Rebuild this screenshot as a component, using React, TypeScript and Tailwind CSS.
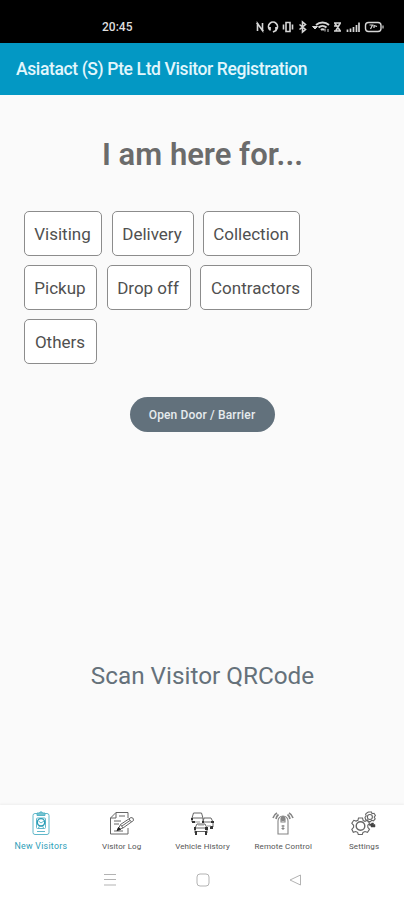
import React from "react";

const chipRows = [
  [
    { label: "Visiting", width: "w-[78px]" },
    { label: "Delivery", width: "w-[82px]" },
    { label: "Collection", width: "w-[97px]" },
  ],
  [
    { label: "Pickup", width: "w-[73px]" },
    { label: "Drop off", width: "w-[84px]" },
    { label: "Contractors", width: "w-[112px]" },
  ],
  [{ label: "Others", width: "w-[73px]" }],
];

function StatusIcons() {
  return (
    <svg width="130" height="14" viewBox="0 0 130 14" fill="none" stroke="#d6d6d6" strokeWidth="1.4">
      {/* NFC */}
      <path d="M2.5 11V3.5L7.5 10.5V3M1.5 3l2 1.5M8.5 11l-2-1.5" strokeWidth="1.6" />
      {/* headset */}
      <path d="M14.5 9.5A4.5 4.5 0 1 1 21.5 9.5M15 7v3.5M21 7v3.5L18 12" strokeWidth="1.7" />
      {/* vibrate */}
      <path d="M31 2.5h4v9h-4zM28.5 4.5v5M37.5 4.5v5" strokeWidth="1.6" />
      {/* bluetooth */}
      <path d="M44.5 4.5l6 5-3 2.5V2l3 2.5-6 5" strokeWidth="1.6" />
      {/* wifi */}
      <path d="M61 5a9.5 9.5 0 0 1 13 0M63.5 7.5a6 6 0 0 1 8 0M66 10a2 2 0 0 1 3 0" strokeWidth="1.9" />
      <path d="M57.5 6.5h5L60 9zM70 8.5v3M73 9v3" fill="#d6d6d6" strokeWidth="1" />
      {/* call over wifi */}
      <path d="M79 3h7M79 11h7M80 3.5l5 7M85 3.5l-4 7M79 6h4" strokeWidth="1.6" />
      {/* signal */}
      <path d="M92.5 9.5V12M95.5 8.5V12M98.5 7V12M101.5 5V12M104 2.5V12" strokeWidth="1.7" />
      {/* battery */}
      <rect x="110.5" y="2.5" width="15.5" height="9" rx="3" />
      <path d="M128 5.5v3M114.5 5h3l-2 4M119 8V5.5l3 1" strokeWidth="1.2" />
    </svg>
  );
}

function BadgeIcon() {
  return (
    <svg width="26" height="26" viewBox="0 0 26 26" fill="none" stroke="#4fb0c4" strokeWidth=".9">
      <rect x="5" y="3.5" width="16" height="21" rx="2" />
      <path d="M9 5.5V3h2.2a2 2 0 0 1 3.6 0H17v2.5z" fill="#73c3d0" />
      <rect x="8.5" y="8" width="9" height="10.5" rx="1" />
      <circle cx="13" cy="12.3" r="3.7" stroke="#2b9db7" strokeWidth="1.4" />
      <path d="M10.5 11l2.5 2 3-2M10 17.5q3-3 6 0M9 21.5h8" />
    </svg>
  );
}

function LogIcon() {
  return (
    <svg width="26" height="26" viewBox="0 0 26 26" fill="none" stroke="#666" strokeWidth="1">
      <path d="M19 8V2.5H7L1.5 8v16H19v-6M7 2.5V8H1.5M10 6h6M5 11h7M5 14h5M5 21h9" />
      <path d="M9 19.5l2.5-5L22 7.5q3 0 2.5 3L14 18z" fill="#fff" />
      <path d="M20 9l2.5 3M11.5 14.5L14 18M13 16l8-5.5" />
      <path d="M8 20.5l1.5-3 2 2z" fill="#222" stroke="#222" />
    </svg>
  );
}

function VehicleIcon() {
  return (
    <svg width="28" height="26" viewBox="0 0 28 26" fill="none" stroke="#666" strokeWidth="1">
      <path d="M4 8l1.5-5h8L15 8v3M4 8v4M4 8h11M15 12l1-4h7l2 4v5M15 12h10" />
      <path d="M7 18l2-4h8l2 4v5M7 18v5M7 18h12M9 21.5h8" />
      <path d="M3 8h2v2H3zM14 11h2v2h-2zM23 11h3v2h-3zM6 17h2v3H6zM17 17h3v3h-3zM7 21h2v4H7zM17 21h2v4h-2zM22 16h3v3h-3zM4 11h3v2H4z" fill="#343434" stroke="none" />
      <path d="M10 15h6M19 16h4M7 12h5" stroke="#999" />
    </svg>
  );
}

function RemoteIcon() {
  return (
    <svg width="26" height="26" viewBox="0 0 26 26" fill="none" stroke="#858585" strokeWidth="1.1">
      <path d="M8 24V11a5 5 0 0 1 10 0v13zM11 12V9a2 2 0 0 1 4 0v3z" />
      <circle cx="13" cy="9" r="1.7" fill="#888" />
      <path d="M11.5 16h3M11.5 18.5h3M13 15v5" />
      <path d="M3 8q1-3.5 4-5M6 9q.5-3 2.5-4.5M23 8q-1-3.5-4-5M20 9q-.5-3-2.5-4.5" strokeWidth="1.6" />
    </svg>
  );
}

function GearsIcon() {
  return (
    <svg width="26" height="26" viewBox="0 0 26 26" fill="none" stroke="#666" strokeWidth="1.1">
      <path d="M7.5 8h4l.7 2.5 1.8.8 2.5-1 2 3-1.7 2v2l1.7 2-2 3-2.5-.8-2 .9-.7 2.1h-4l-.7-2.2-1.9-.8-2.4.8-1.5-3 1.8-2v-2l-1.8-2 2-3 2.3.8 1.8-.8z" />
      <circle cx="9.5" cy="16" r="4.3" strokeWidth="1.4" />
      <path d="M17.5 2h3l.5 1.7 2-.4 1.4 2.2-1.2 1.6 1 1.8-1.7 2-2-.6-1 1.3h-2.4l-.7-1.7-1.7-.2-.7-2.4 1.2-1.4-.6-1.8 1.6-1.4z" />
      <circle cx="18.9" cy="7" r="2.5" />
      <path d="M20.5 13h2v1.5h1.5V17h-4v-1.5h-1.5V14h2z" fill="#444" stroke="#444" strokeWidth=".5" />
    </svg>
  );
}

const tabs = [
  { label: "New Visitors", icon: <BadgeIcon />, style: "mt-[5px] text-[#2b9db7] text-[8.8px] tracking-[0.28px]" },
  { label: "Visitor Log", icon: <LogIcon />, style: "mt-[6px] text-[#555] text-[8px] tracking-[0.08px]" },
  { label: "Vehicle History", icon: <VehicleIcon />, style: "mt-[6px] text-[#555] text-[8px] tracking-[0.08px]" },
  { label: "Remote Control", icon: <RemoteIcon />, style: "mt-[6px] text-[#555] text-[8px] tracking-[0.16px]" },
  { label: "Settings", icon: <GearsIcon />, style: "mt-[6px] text-[#555] text-[8px] tracking-[0.15px]" },
];

export default function App() {
  return (
    <div className="flex h-[900px] w-[404px] flex-col overflow-hidden bg-[#fafafa] font-[Roboto,sans-serif]">
      <div className="flex h-[43px] shrink-0 items-center justify-between bg-black pt-[11px] pr-[19px] pl-[102px]">
        <span className="text-[12px] leading-none font-medium text-[#dedede]">20:45</span>
        <StatusIcons />
      </div>

      <header className="flex h-[52px] shrink-0 items-center bg-[#0398c4] pb-px pl-4">
        <h1 className="mt-[2px] text-[17.5px] leading-none font-medium tracking-[-0.38px] whitespace-nowrap text-[#e2f6fc]">Asiatact (S) Pte Ltd Visitor Registration</h1>
      </header>

      <main className="flex flex-1 flex-col items-center">
        <h2 className="mt-[42px] ml-px text-[31px] leading-9 font-semibold whitespace-nowrap text-[#6b6b6b]">I am here for...</h2>
        <div className="mt-[38px] flex w-full flex-col gap-[9px] pl-6">
          {chipRows.map((row, i) => (
            <div key={i} className="flex gap-[9.5px]">
              {row.map((chip) => (
                <button key={chip.label} className={`flex h-[45px] items-center justify-center rounded-[5px] border border-[#8c8c8c] bg-white pt-[2px] pr-px text-[17px] font-normal whitespace-nowrap text-[#505050] ${chip.width}`}>
                  {chip.label}
                </button>
              ))}
            </div>
          ))}
        </div>
        <button className="mt-[33px] h-[35px] w-[145px] rounded-full bg-[#62717c] text-[12px] font-medium tracking-[0.15px] whitespace-nowrap text-[#e6ebee]">Open Door / Barrier</button>
        <p className="mt-[228px] ml-px text-[24.3px] leading-8 font-normal whitespace-nowrap text-[#65717a]">Scan Visitor QRCode</p>
      </main>

      <nav className="grid h-[55px] shrink-0 grid-cols-5 bg-white shadow-[0_-1px_2px_#eeeeee]">
        {tabs.map((tab) => (
          <div key={tab.label} className="flex flex-col items-center pt-[5px] pl-px">
            {tab.icon}
            <span className={`leading-[10px] whitespace-nowrap ${tab.style}`}>{tab.label}</span>
          </div>
        ))}
      </nav>
      <div className="flex h-10 shrink-0 items-start bg-white pt-[13px]">
        <svg className="ml-[103px]" width="14" height="14" viewBox="0 0 14 14" stroke="#b3b3b3"><path d="M1 1.5h12M1 6.5h12M1 12h12" /></svg>
        <svg className="ml-[79px]" width="14" height="14" viewBox="0 0 14 14" fill="none" stroke="#b3b3b3"><rect x="1" y="1" width="12" height="12" rx="3" /></svg>
        <svg className="ml-[78px]" width="14" height="14" viewBox="0 0 14 14" fill="none" stroke="#b3b3b3"><path d="M12.5 2v10L2 7z" /></svg>
      </div>
    </div>
  );
}
